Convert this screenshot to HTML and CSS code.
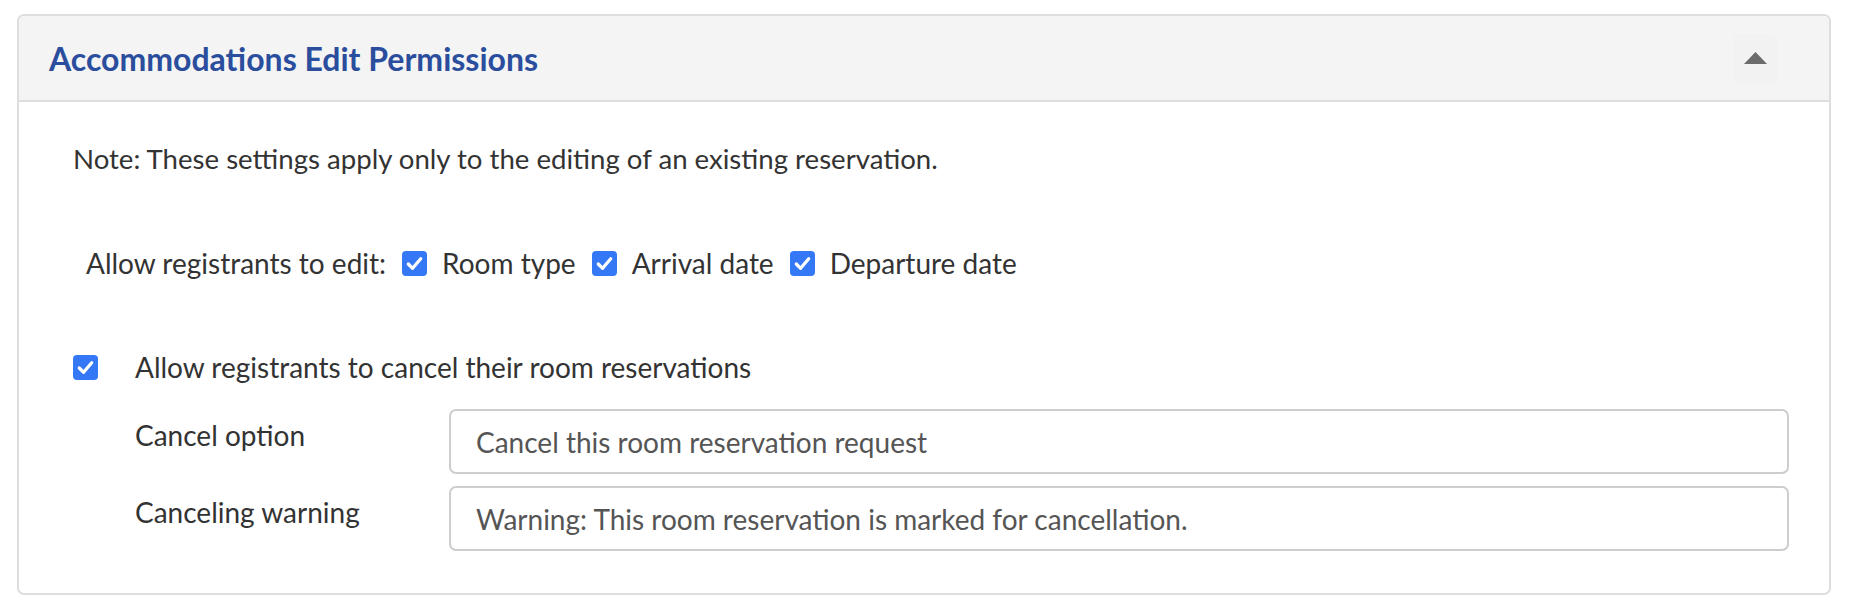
FILE: index.html
```html
<!DOCTYPE html>
<html lang="en">
<head>
<meta charset="utf-8">
<title>Accommodations Edit Permissions</title>
<link rel="stylesheet" href="styles.css">
</head>
<body>
<section class="panel">
  <header class="panel-header">
    <h2 class="panel-title">Accommodations Edit Permissions</h2>
    <button class="toggle" type="button" aria-label="Collapse">
      <svg width="23" height="12" viewBox="0 0 23 12"><path d="M0 12 L11.5 0 L23 12 Z" fill="#6b6b6b"/></svg>
    </button>
  </header>
  <div class="panel-body">
    <p class="note">Note: These settings apply only to the editing of an existing reservation.</p>
    <div class="edit-row">
      <span class="edit-label">Allow registrants to edit:</span>
      <label class="check"><span class="box"><svg viewBox="0 0 24 24"><path d="M5.5 12.5 L10 17 L18.5 7" fill="none" stroke="#fff" stroke-width="3.4" stroke-linecap="round" stroke-linejoin="round"/></svg></span>Room type</label>
      <label class="check"><span class="box"><svg viewBox="0 0 24 24"><path d="M5.5 12.5 L10 17 L18.5 7" fill="none" stroke="#fff" stroke-width="3.4" stroke-linecap="round" stroke-linejoin="round"/></svg></span>Arrival date</label>
      <label class="check"><span class="box"><svg viewBox="0 0 24 24"><path d="M5.5 12.5 L10 17 L18.5 7" fill="none" stroke="#fff" stroke-width="3.4" stroke-linecap="round" stroke-linejoin="round"/></svg></span>Departure date</label>
    </div>
    <div class="cancel-row">
      <span class="box"><svg viewBox="0 0 24 24"><path d="M5.5 12.5 L10 17 L18.5 7" fill="none" stroke="#fff" stroke-width="3.4" stroke-linecap="round" stroke-linejoin="round"/></svg></span>
      <span class="cancel-text">Allow registrants to cancel their room reservations</span>
    </div>
    <div class="form-grid">
      <label class="field-label">Cancel option</label>
      <div class="input">Cancel this room reservation request</div>
      <label class="field-label">Canceling warning</label>
      <div class="input">Warning: This room reservation is marked for cancellation.</div>
    </div>
  </div>
</section>
</body>
</html>
```
FILE: styles.css
```css
* { box-sizing: border-box; }
html, body { background: #fff; }
body {
  margin: 14px 19px 0 17px;
  font-family: Lato, "Open Sans", sans-serif;
  color: #333;
}
.panel {
  border: 2px solid #dedede;
  border-radius: 7px;
  height: 581px;
  overflow: hidden;
}
.panel-header {
  background: #f4f4f4;
  border-bottom: 2px solid #dedede;
  height: 86px;
  display: flex;
  align-items: center;
  justify-content: space-between;
  padding: 0 51px 0 30px;
}
.panel-title {
  margin: 0;
  font-size: 32px;
  font-weight: 700;
  color: #2a4e9d;
}
.toggle {
  width: 45px;
  height: 49px;
  border: none;
  border-radius: 6px;
  background: #f2f2f2;
  display: flex;
  align-items: center;
  justify-content: center;
  padding: 0;
}
.panel-body {
  padding: 40px 40px 0 54px;
  font-size: 28px;
  line-height: 34px;
}
.note { margin: 0; font-size: 27.6px; }
.edit-row {
  margin-top: 70px;
  padding-left: 13px;
  display: flex;
  align-items: center;
}
.edit-label { margin-right: 16px; }
.check {
  display: flex;
  align-items: center;
  margin-right: 16px;
}
.check .box { margin-right: 15px; }
.box {
  width: 25px;
  height: 25px;
  border-radius: 4px;
  background: #3478f6;
  display: inline-flex;
  align-items: center;
  justify-content: center;
  flex: none;
}
.box svg { width: 23px; height: 23px; }
.cancel-row {
  margin-top: 70px;
  display: flex;
  align-items: center;
}
.cancel-row .box { margin-right: 37px; }
.form-grid {
  margin-top: 25px;
  padding-left: 62px;
  display: grid;
  grid-template-columns: 314px 1fr;
  row-gap: 12px;
}
.field-label { padding-top: 9px; }
.input {
  height: 65px;
  border: 2px solid #cdcdcd;
  border-radius: 7px;
  padding: 0 25px;
  display: flex;
  align-items: center;
  color: #555;
}
```
